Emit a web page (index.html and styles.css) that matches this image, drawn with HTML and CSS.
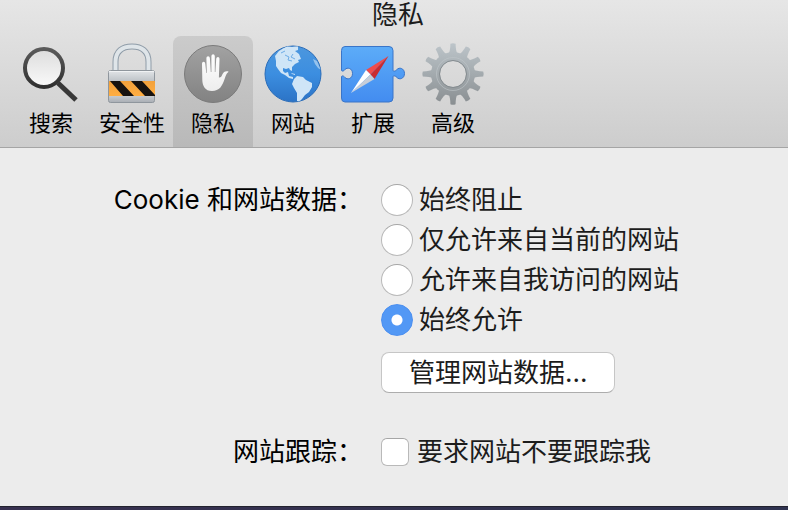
FILE: index.html
```html
<!DOCTYPE html>
<html lang="zh-CN">
<head>
<meta charset="utf-8">
<meta name="viewport" content="width=device-width, initial-scale=1">
<title>隐私</title>
<link rel="stylesheet" href="styles.css">
</head>
<body>
<header class="header">
  <h1 class="title">隐私</h1>
  <nav class="toolbar">
    <button class="tab" type="button">
      <svg class="icon" viewBox="0 0 64 64" aria-hidden="true">
        <defs>
          <linearGradient id="glass" x1="0" y1="0" x2="0" y2="1"><stop offset="0" stop-color="#dcdcdc"/><stop offset="1" stop-color="#fafafa"/></linearGradient>
          <linearGradient id="rim" x1="0" y1="0" x2="0" y2="1"><stop offset="0" stop-color="#5a5a5a"/><stop offset="1" stop-color="#303030"/></linearGradient>
        </defs>
        <path d="M39 41L57 58" stroke="#383838" stroke-width="5"/>
        <circle cx="25" cy="26" r="19" fill="url(#glass)" stroke="url(#rim)" stroke-width="4"/>
      </svg>
      <span>搜索</span>
    </button>
    <button class="tab" type="button">
      <svg class="icon" viewBox="0 0 64 64" aria-hidden="true">
        <defs>
          <linearGradient id="steel" x1="0" y1="0" x2="0" y2="1"><stop offset="0" stop-color="#e2e5e8"/><stop offset=".35" stop-color="#bcc1c6"/><stop offset=".8" stop-color="#c6cace"/><stop offset="1" stop-color="#a9aeb4"/></linearGradient>
          <linearGradient id="amber" x1="0" y1="0" x2="0" y2="1"><stop offset="0" stop-color="#f2a13c"/><stop offset="1" stop-color="#ffae42"/></linearGradient>
          <clipPath id="band"><path d="M9 39H55V54H9z"/></clipPath>
        </defs>
        <path d="M15.500 29V20C15.500 9 22.500 4.500 32 4.500S48.500 9 48.500 20V29" fill="none" stroke="#8f9ca8" stroke-width="6"/>
        <path d="M15.500 29V20C15.500 9 22.500 4.500 32 4.500S48.500 9 48.500 20V29" fill="none" stroke="#dfe5e9" stroke-width="4"/>
        <rect x="8.500" y="28.500" width="46" height="32" rx="2" fill="url(#steel)" stroke="#8f969d"/>
        <path d="M9 29.500H54" stroke="#f0f2f4"/>
        <g clip-path="url(#band)">
          <path d="M9 39H55V54H9z" fill="url(#amber)"/>
          <path d="M10 39H20L34 54H23zM31 39H42L55 53V54H45z" fill="#171310"/>
        </g>
      </svg>
      <span>安全性</span>
    </button>
    <button class="tab tab-selected" type="button" aria-current="page">
      <svg class="icon" viewBox="0 0 64 64" aria-hidden="true">
        <defs>
          <linearGradient id="disc" x1="0" y1="0" x2="0" y2="1"><stop offset="0" stop-color="#a2a2a2"/><stop offset="1" stop-color="#828282"/></linearGradient>
          <linearGradient id="palm" x1="0" y1="0" x2="0" y2="1"><stop offset="0" stop-color="#fff"/><stop offset="1" stop-color="#ededed"/></linearGradient>
        </defs>
        <circle cx="32" cy="32" r="28.500" fill="url(#disc)" stroke="#7b7b7b"/>
        <path fill="url(#palm)" d="M21 22C21 19 24.200 19 24.300 22L25.300 31H25.800L25.400 16.500C25.400 13.600 28.800 13.600 28.900 16.500L29.800 30H30.400V14.300C30.400 11.600 33.800 11.600 33.800 14.300V30H34.400L35.200 17C35.400 14.200 38.600 14.300 38.500 17L37.900 35.500C39.600 35.800 40.600 34.500 41.300 32.500C42.300 29.900 44.500 28.700 47 29.300C47.700 29.600 47.500 30.100 46.800 30.600C45.400 31.700 44.700 34 43.600 37C41.300 44 38.500 49 31 49C24 49 21.500 44 21.300 38Z"/>
      </svg>
      <span>隐私</span>
    </button>
    <button class="tab" type="button">
      <svg class="icon" viewBox="0 0 64 64" aria-hidden="true">
        <defs>
          <linearGradient id="ocean" x1="0" y1="0" x2="0" y2="1"><stop offset="0" stop-color="#4c97de"/><stop offset=".5" stop-color="#3c8ee0"/><stop offset="1" stop-color="#2b73c6"/></linearGradient>
          <clipPath id="sphere"><circle cx="32" cy="32" r="28"/></clipPath>
        </defs>
        <circle cx="32" cy="32" r="28" fill="url(#ocean)" stroke="#2a6cb8"/>
        <g clip-path="url(#sphere)" fill="#cfe5f7">
          <path d="M15 19L14 14L18 9L26 4L31 5L37 4L37 8L34 9L38 12L40 17L37 18L38 20L34 22L31 25L31 29L29 28L28 26L25 27L22 26L22 29L24 31L27 30L28 34L32 35L32 37L28 36L24 33L20 31L17 27L15 24Z"/>
          <path d="M52 17L56 19L60 28L57 26L54 22Z" opacity=".6"/>
          <path d="M30 31L34 32L34 33L31 32Z"/>
          <path d="M33 37L36 34L42 35L45 38L51 41L51 45L48 50L44 53L41 57L38 60L36 59L36 51L33 46L31 42Z"/>
        </g>
        <path d="M24 13L28 15L27 18L31 19M32 12L30 15L34 17M20 11L24 9" fill="none" stroke="#6eace6"/>
      </svg>
      <span>网站</span>
    </button>
    <button class="tab" type="button">
      <svg class="icon" viewBox="0 0 64 64" aria-hidden="true">
        <defs>
          <linearGradient id="piece" x1="0" y1="0" x2="0" y2="1"><stop offset="0" stop-color="#5cacf8"/><stop offset="1" stop-color="#438cf0"/></linearGradient>
        </defs>
        <path d="M4 4.500H48Q52 4.500 52 8.500V28C52 30 55 29 56 27.500C58 25 63.500 26 63.500 31.500S58 38 56 35.500C55 34 52 33 52 35V56Q52 60 48 60H4Q.5 60 .5 56V35C.5 33 3 34 4 35.500C6 38 11.500 37 11.500 31.500S6 25 4 27.500C3 29 .5 30 .5 28V8.500Q.5 4.500 4 4.500Z" fill="url(#piece)" stroke="#3a75c8"/>
        <path d="M47.500 14L25 28L29.500 32.500Z" fill="#f04c4c"/>
        <path d="M47.500 14L29.500 32.500L33.500 37Z" fill="#c92b30"/>
        <path d="M10 51L25 28L29.500 32.500Z" fill="#fff"/>
        <path d="M10 51L29.500 32.500L33.500 37Z" fill="#c7ced8"/>
      </svg>
      <span>扩展</span>
    </button>
    <button class="tab" type="button">
      <svg class="icon" viewBox="0 0 64 64" aria-hidden="true">
        <defs>
          <linearGradient id="metal" gradientUnits="userSpaceOnUse" x1="0" y1="2" x2="0" y2="62"><stop offset="0" stop-color="#bcc4c9"/><stop offset=".5" stop-color="#a3aaae"/><stop offset="1" stop-color="#8a8f92"/></linearGradient>
          <path id="tooth" d="M27.500 12Q29.300 9 29.400 1.800Q32 .8 34.600 1.800Q34.700 9 36.500 12Z"/>
          <mask id="gear" maskUnits="userSpaceOnUse" x="0" y="0" width="64" height="64">
            <g fill="#fff">
              <circle cx="32" cy="32" r="22"/>
              <use href="#tooth"/>
              <use href="#tooth" transform="rotate(30 32 32)"/>
              <use href="#tooth" transform="rotate(60 32 32)"/>
              <use href="#tooth" transform="rotate(90 32 32)"/>
              <use href="#tooth" transform="rotate(120 32 32)"/>
              <use href="#tooth" transform="rotate(150 32 32)"/>
              <use href="#tooth" transform="rotate(180 32 32)"/>
              <use href="#tooth" transform="rotate(210 32 32)"/>
              <use href="#tooth" transform="rotate(240 32 32)"/>
              <use href="#tooth" transform="rotate(270 32 32)"/>
              <use href="#tooth" transform="rotate(300 32 32)"/>
              <use href="#tooth" transform="rotate(330 32 32)"/>
            </g>
            <circle cx="32" cy="32" r="13" fill="#000"/>
          </mask>
        </defs>
        <path d="M0 0H64V64H0z" fill="url(#metal)" mask="url(#gear)"/>
        <circle cx="32" cy="32" r="16.500" fill="none" stroke="#c0c6ca" opacity=".6"/>
        <circle cx="32" cy="32" r="13.500" fill="none" stroke="#858c90"/>
      </svg>
      <span>高级</span>
    </button>
  </nav>
</header>
<main class="content">
  <form class="settings">
    <div class="row-label" id="cookie-label">Cookie 和网站数据：</div>
    <div class="options" role="radiogroup" aria-labelledby="cookie-label">
      <label class="option"><input class="radio" type="radio" name="cookies">始终阻止</label>
      <label class="option"><input class="radio" type="radio" name="cookies">仅允许来自当前的网站</label>
      <label class="option"><input class="radio" type="radio" name="cookies">允许来自我访问的网站</label>
      <label class="option"><input class="radio" type="radio" name="cookies" checked>始终允许</label>
      <button class="manage" type="button">管理网站数据...</button>
    </div>
    <div class="row-label">网站跟踪：</div>
    <div class="options">
      <label class="option option-check"><input class="checkbox" type="checkbox">要求网站不要跟踪我</label>
    </div>
  </form>
</main>
<div class="desktop-edge"></div>
</body>
</html>
```
FILE: styles.css
```css
* {
  box-sizing: border-box;
}

body {
  margin: 0;
  min-height: 100vh;
  display: flex;
  flex-direction: column;
  background: #ececec;
  color: #1c1c1c;
  font: 26px/40px Inter, "Noto Sans CJK SC", sans-serif;
}

button {
  font: inherit;
  color: inherit;
}

.header {
  background: linear-gradient(#e6e6e6, #cdcdcd);
  border-bottom: 1px solid #a5a5a5;
}

.title {
  margin: 0;
  padding-left: 8px;
  font-size: 26px;
  font-weight: 400;
  line-height: 30px;
  text-align: center;
}

.toolbar {
  display: flex;
  padding: 6px 11px 0;
}

.tab {
  min-width: 80px;
  padding: 6px 8px 7px;
  border: 0;
  border-radius: 8px 8px 0 0;
  background: none;
  color: #000;
  display: flex;
  flex-direction: column;
  align-items: center;
  font-size: 22px;
  line-height: 34px;
}

.tab-selected {
  background: linear-gradient(#cbcbcb, #b9b9b9);
}

.icon {
  width: 64px;
  height: 64px;
}

.content {
  flex: 1;
  padding: 32px 0;
}

.settings {
  display: grid;
  grid-template-columns: 363px 1fr;
  gap: 39px 18px;
}

.row-label {
  color: #000;
  text-align: right;
}

.options {
  display: flex;
  flex-direction: column;
  align-items: flex-start;
}

.option {
  display: flex;
  align-items: center;
  gap: 6px;
}

.option-check {
  gap: 8px;
}

.radio,
.checkbox {
  appearance: none;
  flex: none;
  margin: 0;
  border: 1px solid #b9b9b9;
  border-top-color: #a6a6a6;
  background: #fff;
}

.radio {
  width: 32px;
  height: 32px;
  border-radius: 50%;
}

.radio:checked {
  border-color: #4b8ff0;
  background: radial-gradient(circle, #fff 5px, #5298f5 6px);
}

.checkbox {
  width: 28px;
  height: 28px;
  border-radius: 6px;
}

.manage {
  margin-top: 12px;
  height: 41px;
  padding: 0 27px;
  border: 1px solid #c6c6c6;
  border-bottom-color: #adadad;
  border-radius: 8px;
  background: #fff;
  line-height: 36px;
}

.desktop-edge {
  height: 4px;
  background: linear-gradient(90deg, #37304f, #2f3350);
  border-top: 1px solid #22222e;
}
```
